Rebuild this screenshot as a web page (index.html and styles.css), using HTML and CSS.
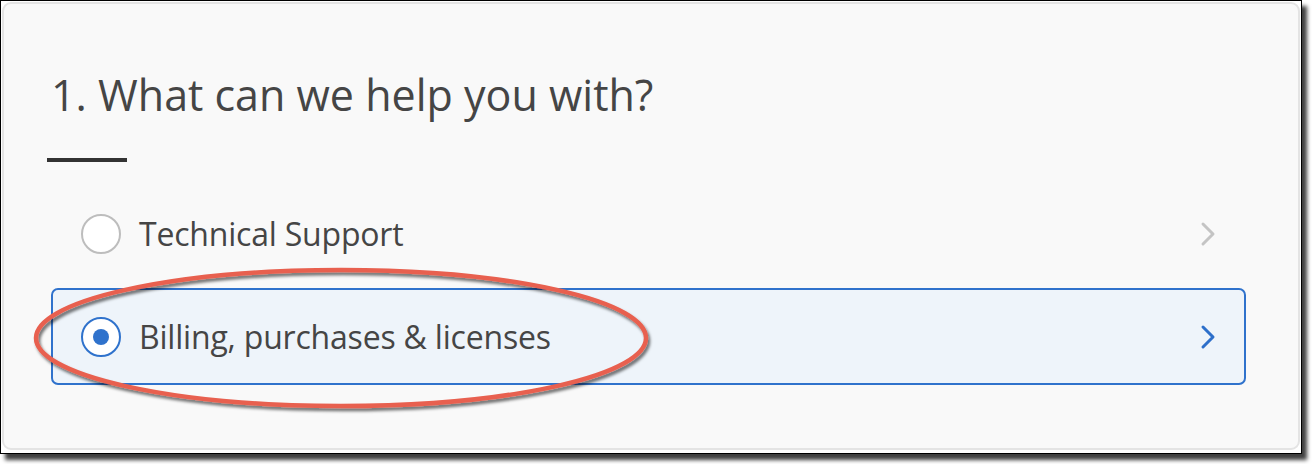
FILE: index.html
```html
<!DOCTYPE html>
<html lang="en">
<head>
<meta charset="utf-8">
<title>What can we help you with?</title>
<link rel="stylesheet" href="styles.css">
</head>
<body>
<div class="frame">
  <div class="panel">
    <h1 class="title">1. What can we help you with?</h1>
    <div class="rule"></div>
    <div class="options">
      <div class="option">
        <span class="radio"></span>
        <span class="label">Technical Support</span>
        <svg class="chev" width="16" height="26" viewBox="0 0 16 26"><path d="M3 3 L13 13 L3 23" fill="none" stroke="#c4c4c4" stroke-width="3" stroke-linecap="round" stroke-linejoin="round"/></svg>
      </div>
      <div class="option selected">
        <span class="radio on"><span class="dot"></span></span>
        <span class="label">Billing, purchases &amp; licenses</span>
        <svg class="chev" width="16" height="26" viewBox="0 0 16 26"><path d="M3 3 L13 13 L3 23" fill="none" stroke="#2d6fca" stroke-width="3" stroke-linecap="round" stroke-linejoin="round"/></svg>
      </div>
    </div>
    <svg class="annot" width="640" height="160" viewBox="0 0 640 160">
      <defs>
        <filter id="sh" x="-10%" y="-20%" width="120%" height="140%">
          <feDropShadow dx="2" dy="3" stdDeviation="1.5" flood-color="#000" flood-opacity="0.55"/>
        </filter>
      </defs>
      <ellipse cx="308" cy="72" rx="305" ry="68" fill="none" stroke="#e8604f" stroke-width="4.5" filter="url(#sh)"/>
    </svg>
  </div>
</div>
</body>
</html>
```
FILE: styles.css
```css
html, body {
  margin: 0;
  padding: 0;
  background: #ffffff;
}
body {
  height: 464px;
}
.frame {
  width: 1300px;
  height: 452px;
  border: 1px solid #000;
  box-shadow: 5px 6px 4px rgba(0,0,0,0.75);
  background: #fff;
  box-sizing: content-box;
}
.panel {
  position: relative;
  margin: 1px;
  height: 448px;
  box-sizing: border-box;
  border: 2px solid #e4e4e4;
  border-radius: 9px;
  background: #f9f9f9;
  padding: 0 50px 0 43px;
  font-family: "Open Sans", "Liberation Sans", sans-serif;
  color: #464646;
}
.title {
  margin: 0;
  padding: 61px 0 0 4px;
  font-weight: 400;
  font-size: 43px;
  line-height: 60px;
  color: #454545;
}
.rule {
  width: 80px;
  height: 4px;
  background: #333;
  margin-top: 33px;
}
.options {
  margin-top: 23px;
  margin-left: 4px;
  display: flex;
  flex-direction: column;
  gap: 6px;
  width: 1195px;
}
.option {
  display: flex;
  align-items: center;
  height: 97px;
  box-sizing: border-box;
  border: 2px solid transparent;
  border-radius: 7px;
  padding: 1px 28px 0 28px;
}
.option.selected {
  border-color: #2f72cc;
  background: #eef4fa;
}
.radio {
  width: 40px;
  height: 40px;
  box-sizing: border-box;
  border: 2px solid #bdbdbd;
  border-radius: 50%;
  background: #fff;
  display: flex;
  align-items: center;
  justify-content: center;
  flex: none;
}
.radio.on {
  border-color: #2f72cc;
}
.dot {
  width: 16px;
  height: 16px;
  border-radius: 50%;
  background: #2f72cc;
}
.label {
  margin-left: 18px;
  font-size: 32px;
  letter-spacing: -0.2px;
  line-height: 40px;
  color: #454545;
  flex: 1;
}
.chev {
  flex: none;
}
.annot {
  position: absolute;
  left: 29px;
  top: 262px;
  overflow: visible;
}
```
